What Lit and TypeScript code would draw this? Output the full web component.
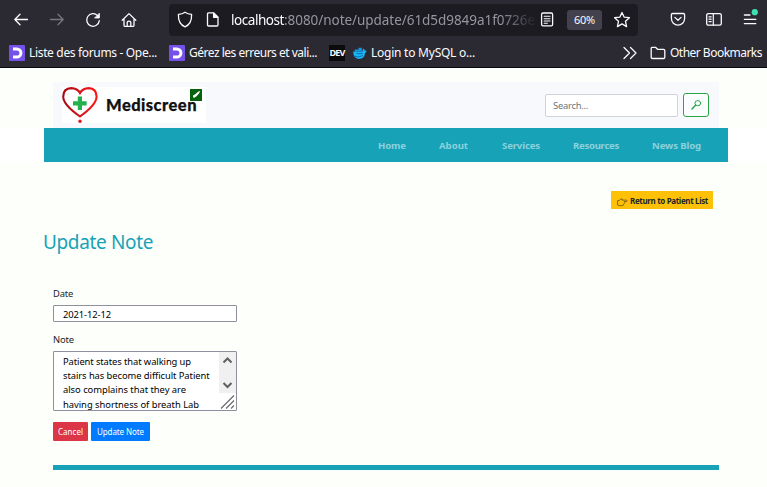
import { LitElement, html, css, svg } from "lit";
import { customElement, property } from "lit/decorators.js";

/** A single line of text whose tracking is adjusted to fill a given width. */
@customElement("fit-text")
class FitText extends LitElement {
  @property({ type: Number }) width = 0;
  @property() text = "";
  static styles = css`
    :host { display: inline-block; white-space: pre; flex: none; }
    .run { display: inline-block; }
  `;
  render() {
    return html`<span class="run">${this.text}</span>`;
  }
  firstUpdated() {
    const run = this.renderRoot.querySelector(".run") as HTMLElement;
    const natural = run.getBoundingClientRect().width;
    run.style.letterSpacing = `${(this.width - natural) / this.text.length}px`;
    this.style.width = `${this.width}px`;
  }
}

const t = (text: string, width: number) => html`<fit-text .text=${text} .width=${width}></fit-text>`;

const icon = (body: unknown, w = 16, h = 16) =>
  html`<svg width=${w} height=${h} viewBox="0 0 ${w} ${h}" fill="none" stroke="currentColor" stroke-width="1.3" stroke-linecap="round" stroke-linejoin="round">${body}</svg>`;

const back = icon(svg`<path d="M14.5 7.5H2M7 2.3L1.8 7.5L7 12.7"/>`);
const forward = icon(svg`<path d="M1.5 7.5H14M9 2.3L14.2 7.5L9 12.7"/>`);
const reload = icon(svg`<path d="M12.6 3.6A6.3 6.3 0 1 0 14.3 8.7"/><path d="M14.4 1.5V6H9.9Z" fill="currentColor" stroke-width=".8"/>`);
const home = icon(svg`<path d="M1.2 8.2L8 1.6L14.8 8.2M3 7V13.2Q3 14.4 4.2 14.4H11.8Q13 14.4 13 13.2V7M6.2 14.2V10.3Q6.2 9.2 8 9.2T9.8 10.3V14.2"/>`);
const shield = icon(svg`<path d="M8 .2C10 1.6 12 2.2 14.6 2.4C14.8 8.3 12.6 12.8 8 14.8C3.4 12.8 1.2 8.3 1.4 2.4C4 2.2 6 1.6 8 .2Z"/>`);
const page = icon(svg`<path d="M3.5 .9H8.8L13 5.1V12.8Q13 14 11.8 14H3.7Q2.5 14 2.5 12.8V2.1Q2.5 .9 3.5 .9Z"/><path d="M8.6 1.1V5.3H12.8Z" fill="currentColor"/>`);
const reader = icon(svg`<rect x="2.6" y="1" width="11" height="12.8" rx="1.4"/><path d="M5.2 4.3H11M5.2 6.7H11M5.2 9H11M5.2 11.3H8.4" stroke-width="1.1"/>`);
const star = icon(svg`<path d="M8 .5L10.1 5.1L15.4 5.7L11.5 9.3L12.6 14.6L8 11.9L3.4 14.6L4.5 9.3L.6 5.7L5.9 5.1Z"/>`);
const pocket = icon(svg`<path d="M2.6 1.5H13.4Q14.6 1.5 14.6 2.7V6.5A6.6 6.6 0 0 1 1.4 6.5V2.7Q1.4 1.5 2.6 1.5Z"/><path d="M4.9 5.4L8 8.3L11.1 5.4"/>`);
const sidebar = icon(svg`<rect x=".7" y="1.6" width="14.6" height="11.6" rx="1.6"/><path d="M7.3 1.6V13.2M3 4.8H5.2M3 7.2H5.2M3 9.6H5.2" stroke-width="1.2"/>`);
const menu = icon(svg`<path d="M2.4 3H8M2.4 7.4H13.8M2.4 11.6H13.8"/><circle cx="12.8" cy=".2" r="3.1" fill="#3fe1b0" stroke="none"/>`);
const chevrons = icon(svg`<path d="M2 2.5L7.5 8L2 13.5M8.5 2.5L14 8L8.5 13.5"/>`);
const folder = icon(svg`<path d="M2 2.3H5.5L7.5 4.3H13.5Q14.8 4.3 14.8 5.6V12.3Q14.8 13.5 13.5 13.5H2.5Q1.2 13.5 1.2 12.3V3.2Q1.2 2.3 2 2.3Z"/>`);
const classroom = html`<svg width="16" height="16" viewBox="0 0 16 16"><rect width="16" height="16" rx="1" fill="#7451eb"/><path d="M4 3.9H7.8A4.1 4.1 0 0 1 7.8 12.1H4" fill="none" stroke="#fff" stroke-width="3"/></svg>`;
const whale = html`<svg width="14" height="14" viewBox="0 0 14 14"><path d="M.2 5.6H9.7Q8.9 4 10.5 2.4Q11.8 3.2 11.7 4.6Q13.2 4.2 13.6 5.2Q12.6 6.9 12 6.9Q11.6 12.8 5.8 12.9Q.4 13 .2 5.6Z" fill="#18b6f6"/><path d="M1.8 3.6H8.8V5.6H1.8ZM5.6 1.8H8.8V3.6H5.6Z" fill="#1497df"/><path d="M1.2 10Q5 12.2 10 9.6" fill="none" stroke="#0f6fae"/><path d="M3.6 7.6H9.6" stroke="#0c5b99" stroke-width=".8"/></svg>`;
const heart = html`<svg width="38" height="36" viewBox="0 0 38 36"><defs><linearGradient id="red"><stop offset="0" stop-color="#a40d12"/><stop offset=".65" stop-color="#e0141a"/><stop offset="1" stop-color="#ff1414"/></linearGradient></defs><path d="M18 29.5Q1.2 18 1.2 9.6Q1.3 1.2 9.3 1.1Q15.4 1.2 18 6Q20.7 1.2 26.7 1.1Q34.4 1.2 34.6 9.6Q34.4 18 18 29.5Z" fill="none" stroke="url(#red)" stroke-width="2.1"/><circle cx="18" cy="34.2" r="1.7" fill="#e3161b"/><path d="M15.8 9.6H20V14.3H24.6V18.5H20V23H15.8V18.5H11V14.3H15.8Z" fill="#22b14c"/></svg>`;
const check = html`<svg class="check" width="12" height="12" viewBox="0 0 12 12"><rect width="12" height="12" fill="#07620d"/><path d="M3 6.6L5.2 5.2L8.4 2.6L10 2L9.2 4.2L6.5 7.3L4.4 8.8L3.2 8.4Z" fill="#fff"/></svg>`;
const glass = html`<svg width="12" height="12" viewBox="0 0 12 12" fill="none" stroke="#28a745" stroke-linecap="round"><ellipse cx="7.8" cy="4.2" rx="2.9" ry="2.6" stroke-width="1"/><path d="M5.5 6.3L2 9.9" stroke-width="1.5"/></svg>`;
const hand = html`<svg width="11" height="9" viewBox="0 0 11 9" fill="none" stroke="#6b520c" stroke-width=".8" stroke-linejoin="round"><path d="M.6 2.6H2L4.2 .9Q5.6 .5 5.3 1.7L4.9 2.1H9.6Q10.7 2.8 9.6 3.6H7.2Q8.2 4.7 7.2 5.2Q7.4 6.3 6.4 6.6Q6.6 7.6 5.5 7.6H2.2L.6 7Z"/></svg>`;

@customElement("app-root")
class AppRoot extends LitElement {
  static styles = css`
    :host { display: block; width: 767px; height: 487px; overflow: hidden; background: #fdfffa; font-family: "Noto Sans", "Open Sans", sans-serif; color: #212529; }
    * { box-sizing: border-box; }
    svg { display: block; flex: none; overflow: visible; }
    .chrome { height: 68px; background: #2b2a33; border-bottom: 1px solid #08080a; color: #fbfbfe; }
    .toolbar { display: flex; align-items: center; height: 39px; padding-left: 13px; }
    .tools { display: flex; gap: 20px; width: 156px; }
    .dim { color: #77767d; }
    .address { display: flex; align-items: center; width: 469px; height: 32px; padding-left: 8px; background: #1c1b22; border-radius: 4px; }
    .address .page { margin-left: 12px; }
    .url { display: flex; width: 306px; margin-left: 10px; margin-right: 2px; overflow: hidden; font-size: 13.5px; line-height: 22px; color: #96959d; padding-top: 1px; -webkit-mask-image: linear-gradient(90deg, #000 270px, transparent 306px); mask-image: linear-gradient(90deg, #000 270px, transparent 306px); }
    .host { color: #fbfbfe; display: flex; }
    .zoom { display: flex; align-items: center; justify-content: center; width: 35px; height: 20px; margin: 0 12px; background: #42414d; border-radius: 3px; font-size: 11px; }
    .actions { display: flex; gap: 20px; margin-left: 32px; }
    .bookmarks { display: flex; align-items: center; height: 28px; padding: 0 0 0 9px; font-size: 12px; line-height: 18px; }
    .mark { display: flex; align-items: center; gap: 4px; }
    .mark + .mark { margin-left: 12px; }
    .dev { width: 16px; height: 16px; background: #0b0b0b; font: bold 9px/16px "Liberation Sans Narrow", "Open Sans", sans-serif; display: flex; justify-content: center; }
    .bookmarks .whale { margin-left: 8px; gap: 4px; }
    .more { margin-left: 147px; }
    .other { display: flex; align-items: center; gap: 4px; margin-left: 12px; }
    header { display: flex; height: 46px; margin: 14px 48px 0 53px; padding: 5px 10px 0 9px; background: #f8f9fc; }
    .logo { position: relative; display: flex; width: 144px; height: 36px; background: #fff; }
    .brand { font: 900 16.5px/36px Lato, sans-serif; color: #111; margin-left: 6px; -webkit-text-stroke: .25px #111; }
    .check { position: absolute; right: 4px; top: 2px; }
    .search { display: flex; gap: 5px; margin-left: auto; padding-top: 6px; }
    .query { width: 133px; height: 23px; margin-top: 1px; background: #fff; border: 1px solid #ced4da; border-radius: 2px; font-size: 9.4px; line-height: 21px; color: #6c757d; padding-left: 7px; }
    .go { display: flex; align-items: center; justify-content: center; width: 26px; height: 24px; border: 1px solid #28a745; border-radius: 3px; background: #fbfcfd; }
    .stripe { background: #fff; padding: 0 39px 0 44px; }
    nav { display: flex; height: 34px; background: #17a2b8; color: #8bd1dc; font-weight: 700; font-size: 9.6px; line-height: 35px; padding-left: 334px; }
    nav span { display: flex; }
    .home { width: 61px; } .about { width: 63px; } .services { width: 71px; } .resources { width: 79px; }
    .return { display: flex; align-items: center; width: 102px; height: 18px; margin: 29px 0 0 611px; background: #ffc107; font-weight: 700; font-size: 8px; line-height: 18px; gap: 2px; padding: 2px 0 0 6px; }
    .return svg { margin-top: 3px; }
    h1 { display: flex; margin: 18px 0 0 43px; font-weight: 400; font-size: 19px; line-height: 31px; color: #17a2b8; }
    form { display: flex; flex-direction: column; align-items: flex-start; margin: 29px 0 0 53px; font-size: 9.4px; }
    label { height: 18px; line-height: 14px; display: flex; }
    .field { width: 184px; height: 17px; border: 1px solid #8f8f9d; border-radius: 1px; background: #fff; color: #000; line-height: 17px; padding-left: 9px; margin-bottom: 11px; }
    .area { display: flex; justify-content: space-between; width: 184px; height: 60px; border: 1px solid #8f8f9d; border-radius: 1px; background: #fff; color: #000; padding-left: 9px; overflow: hidden; }
    .lines { padding-top: 3px; line-height: 14.2px; height: 58px; overflow: hidden; }
    .lines div { height: 14.2px; }
    .buttons { display: flex; gap: 3px; margin-top: 11px; }
    .btn { display: flex; justify-content: center; height: 19px; border-radius: 1px; color: #fff; font-size: 8px; line-height: 20px; }
    .cancel { width: 35px; background: #dc3545; }
    .update { width: 59px; background: #007bff; }
    .rule { height: 5px; margin: 24px 48px 0 53px; background: #17a2b8; }
  `;

  render() {
    const note: [string, number][] = [
      ["Patient states that walking up", 128],
      ["stairs has become difficult Patient", 146.5],
      ["also complains that they are", 123],
      ["having shortness of breath Lab", 136],
    ];
    return html`
      <div class="chrome">
        <div class="toolbar">
          <div class="tools">${back}<span class="dim">${forward}</span>${reload}${home}</div>
          <div class="address">
            ${shield}<span class="page">${page}</span>
            <div class="url"><span class="host">${t("localhost", 53)}</span>${t(":8080/note/update/61d5d9849a1f0726e", 251)}</div>
            ${reader}
            <div class="zoom">${t("60%", 21)}</div>
            ${star}
          </div>
          <div class="actions">${pocket}${sidebar}${menu}</div>
        </div>
        <div class="bookmarks">
          <div class="mark">${classroom}${t("Liste des forums - Ope...", 128)}</div>
          <div class="mark">${classroom}${t("Gérez les erreurs et vali...", 128)}</div>
          <div class="mark"><span class="dev">${t("DEV", 15)}</span></div>
          <div class="mark whale">${whale}${t("Login to MySQL o...", 104)}</div>
          <div class="more">${chevrons}</div>
          <div class="other">${folder}${t("Other Bookmarks", 92)}</div>
        </div>
      </div>
      <header>
        <div class="logo">${heart}<span class="brand">${t("Mediscreen", 91)}</span>${check}</div>
        <div class="search">
          <div class="query">${t("Search...", 35)}</div>
          <div class="go">${glass}</div>
        </div>
      </header>
      <div class="stripe">
        <nav>
          <span class="home">${t("Home", 28)}</span>
          <span class="about">${t("About", 29)}</span>
          <span class="services">${t("Services", 38)}</span>
          <span class="resources">${t("Resources", 46)}</span>
          <span>${t("News Blog", 49)}</span>
        </nav>
      </div>
      <div class="return">${hand}${t("Return to Patient List", 78)}</div>
      <h1>${t("Update Note", 110)}</h1>
      <form>
        <label>${t("Date", 20)}</label>
        <div class="field">${t("2021-12-12", 48)}</div>
        <label>${t("Note", 21)}</label>
        <div class="area">
          <div class="lines">${note.map(([s, w]) => html`<div>${t(s, w)}</div>`)}</div>
          <svg width="18" height="58" viewBox="0 0 18 58" fill="none">
            <path d="M1 0H18V41H1Z" fill="#f0f0f0"/>
            <path d="M5.5 10.5L9.5 6.5L13.5 10.5M5.5 31L9.5 35L13.5 31" stroke="#606060" stroke-width="2"/>
            <path d="M3 56.5L16 43.5M8 56.5L16 48.5M13 56.5L16 53.5" stroke="#66666b" stroke-width="1.1"/>
          </svg>
        </div>
        <div class="buttons">
          <div class="btn cancel">${t("Cancel", 25)}</div>
          <div class="btn update">${t("Update Note", 47)}</div>
        </div>
      </form>
      <div class="rule"></div>
    `;
  }
}
